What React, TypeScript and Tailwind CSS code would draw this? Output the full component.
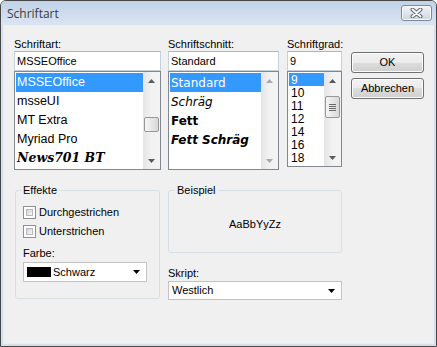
import React from "react";

function Arrow({ up, color }: { up?: boolean; color: string }) {
  return (
    <svg width="7" height="4" viewBox="0 0 7 4">
      <path d={up ? "M3.5 0 L7 4 L0 4 Z" : "M0 0 L7 0 L3.5 4 Z"} fill={color} />
    </svg>
  );
}

function ScrollBar({
  disabled,
  spacer,
  thumb,
  grip,
}: {
  disabled?: boolean;
  spacer?: string;
  thumb?: string;
  grip?: boolean;
}) {
  const c = disabled ? "#a9a9a9" : "#5a5a5a";
  return (
    <div className="w-[17px] shrink-0 flex flex-col bg-gradient-to-r from-[#e4e4e4] via-[#f2f2f2] to-[#f3f3f3]">
      <div className="h-[17px] shrink-0 flex items-center justify-center">
        <Arrow up color={c} />
      </div>
      {thumb ? (
        <>
          <div className={spacer} />
          <div
            className={`${thumb} mx-[1px] w-[15px] shrink-0 rounded-[2px] border border-[#979797] bg-gradient-to-r from-[#f5f5f5] to-[#d9d9d9] flex flex-col items-center justify-center gap-[1px]`}
          >
            {grip ? (
              <>
                <div className="h-px w-[7px] bg-[#6a6a6a]" />
                <div className="h-px w-[7px] bg-[#6a6a6a]" />
                <div className="h-px w-[7px] bg-[#6a6a6a]" />
                <div className="h-px w-[7px] bg-[#6a6a6a]" />
              </>
            ) : null}
          </div>
        </>
      ) : null}
      <div className="flex-1" />
      <div className="h-[17px] shrink-0 flex items-center justify-center">
        <Arrow color={c} />
      </div>
    </div>
  );
}

function Label({ children }: { children: React.ReactNode }) {
  return <div className="h-[14px] leading-[14px] whitespace-nowrap">{children}</div>;
}

function TextBox({ children }: { children: React.ReactNode }) {
  return (
    <div className="h-[20px] bg-white border border-[#c5d2de] border-t-[#abb6c3] leading-[18px] pl-[2px] whitespace-nowrap overflow-hidden">
      {children}
    </div>
  );
}

function Checkbox({ label }: { label: string }) {
  return (
    <div className="h-[13px] flex items-center">
      <div className="w-[13px] h-[13px] border border-[#8e8f8f] bg-white p-[2px] shrink-0">
        <div className="w-full h-full border border-[#b5b9bf] bg-gradient-to-br from-[#d0d3d8] to-[#f7f7f7]" />
      </div>
      <span className="ml-[3px] leading-[13px]">{label}</span>
    </div>
  );
}

function Button({ children }: { children: React.ReactNode }) {
  return (
    <div className="h-[21px] rounded-[3px] border border-[#707070] bg-[linear-gradient(to_bottom,#f2f2f2_0%,#ebebeb_50%,#dddddd_50%,#cfcfcf_100%)] shadow-[inset_0_0_0_1px_#fbfbfb] flex items-center justify-center leading-none">
      {children}
    </div>
  );
}

export default function App() {
  return (
    <div className="w-[437px] h-[347px] font-['Liberation_Sans',Arial,sans-serif] text-[11px] text-black">
      <div className="w-full h-full flex flex-col border border-[#474747] rounded-t-[6px] bg-[#d3e0ef] overflow-hidden">
        {/* Title bar */}
        <div className="h-[24px] shrink-0 flex items-center justify-between pl-[6px] pr-[4px] bg-gradient-to-b from-[#c0d2e7] to-[#dae5f2]">
          <span className="mt-[2px] font-['Open_Sans',sans-serif] text-[12px] text-[#3a3a3a] leading-none">
            Schriftart
          </span>
          <div className="w-[31px] h-[16px] rounded-[3px] border border-[#7d8899] bg-gradient-to-b from-[#f1f4f8] via-[#e1e6ed] to-[#cdd5df] shadow-[inset_0_0_0_1px_#f7f9fb] flex items-center justify-center">
            <svg width="13" height="10" viewBox="0 0 13 10">
              <path d="M2.5 1.5 L10.5 8.5 M10.5 1.5 L2.5 8.5" stroke="#5b6472" strokeWidth="4" strokeLinecap="round" />
              <path d="M2.5 1.5 L10.5 8.5 M10.5 1.5 L2.5 8.5" stroke="#ffffff" strokeWidth="2" strokeLinecap="round" />
            </svg>
          </div>
        </div>

        {/* Client area */}
        <div className="flex-1 mx-[2px] mb-[2px] border border-[#e6eef7] bg-[#f0f0f0] flex flex-col">
          {/* Top row */}
          <div className="flex pt-[11px] pl-[10px]">
            {/* Schriftart */}
            <div className="w-[147px] flex flex-col">
              <Label>Schriftart:</Label>
              <TextBox>MSSEOffice</TextBox>
              <div className="h-[99px] flex border border-[#828790] bg-white">
                <div className="flex-1 pl-[1px] pt-[1px] overflow-hidden text-[12.5px] whitespace-nowrap">
                  <div className="h-[19px] flex items-center pl-[1px] bg-[#3399ff] text-white">MSSEOffice</div>
                  <div className="h-[19px] flex items-center pl-[1px]">msseUI</div>
                  <div className="h-[19px] flex items-center pl-[1px]">MT Extra</div>
                  <div className="h-[19px] flex items-center pl-[1px]">Myriad Pro</div>
                  <div className="h-[19px] flex items-center pl-[1px] font-['DejaVu_Serif',serif] italic font-bold text-[12.5px]">
                    News701 BT
                  </div>
                </div>
                <ScrollBar spacer="h-[28px]" thumb="h-[15px]" />
              </div>
            </div>

            {/* Schriftschnitt */}
            <div className="w-[111px] ml-[7px] flex flex-col">
              <Label>Schriftschnitt:</Label>
              <TextBox>Standard</TextBox>
              <div className="h-[99px] flex border border-[#828790] bg-white">
                <div className="flex-1 pl-[1px] pt-[1px] overflow-hidden font-['DejaVu_Sans',sans-serif] text-[12px] whitespace-nowrap">
                  <div className="h-[19px] flex items-center pl-[1px] bg-[#3399ff] text-white">Standard</div>
                  <div className="h-[19px] flex items-center pl-[1px] italic">Schräg</div>
                  <div className="h-[19px] flex items-center pl-[1px] font-bold">Fett</div>
                  <div className="h-[19px] flex items-center pl-[1px] font-bold italic">Fett Schräg</div>
                </div>
                <ScrollBar disabled />
              </div>
            </div>

            {/* Schriftgrad */}
            <div className="w-[55px] ml-[8px] flex flex-col">
              <Label>Schriftgrad:</Label>
              <TextBox>9</TextBox>
              <div className="h-[96px] flex border border-[#828790] bg-white">
                <div className="flex-1 pl-[1px] pt-[1px] overflow-hidden text-[12px]">
                  <div className="h-[13px] flex items-center pl-[2px] bg-[#3399ff] text-white">9</div>
                  <div className="h-[13px] flex items-center pl-[2px]">10</div>
                  <div className="h-[13px] flex items-center pl-[2px]">11</div>
                  <div className="h-[13px] flex items-center pl-[2px]">12</div>
                  <div className="h-[13px] flex items-center pl-[2px]">14</div>
                  <div className="h-[13px] flex items-center pl-[2px]">16</div>
                  <div className="h-[13px] flex items-center pl-[2px]">18</div>
                </div>
                <ScrollBar spacer="h-[7px]" thumb="h-[22px]" grip />
              </div>
            </div>

            {/* Buttons */}
            <div className="w-[73px] ml-[9px] pt-[15px] flex flex-col gap-[5px]">
              <Button>OK</Button>
              <Button>Abbrechen</Button>
            </div>
          </div>

          {/* Bottom row */}
          <div className="flex mt-[14px] pl-[11px]">
            <fieldset className="w-[145px] h-[115px] border border-[#d5dfe5] rounded-[3px] px-[7px]">
              <legend className="px-[2px] -ml-[2px] leading-[13px]">Effekte</legend>
              <div className="pt-[9px] flex flex-col">
                <Checkbox label="Durchgestrichen" />
                <div className="mt-[6px]">
                  <Checkbox label="Unterstrichen" />
                </div>
                <div className="mt-[9px] h-[13px] leading-[13px]">Farbe:</div>
                <div className="mt-[2px] w-[124px] h-[20px] bg-white border border-[#c3c3c3] flex items-center pl-[3px] pr-[6px]">
                  <div className="w-[24px] h-[10px] bg-black shrink-0" />
                  <span className="ml-[2px] flex-1 leading-none">Schwarz</span>
                  <Arrow color="#000000" />
                </div>
              </div>
            </fieldset>

            <div className="w-[174px] ml-[8px] flex flex-col">
              <fieldset className="h-[69px] border border-[#d5dfe5] rounded-[3px] px-[8px]">
                <legend className="px-[2px] -ml-[2px] leading-[13px]">Beispiel</legend>
                <div className="h-[55px] flex items-center justify-center">AaBbYyZz</div>
              </fieldset>
              <div className="mt-[13px]">
                <Label>Skript:</Label>
              </div>
              <div className="mt-[1px] h-[19px] bg-white border border-[#c3c3c3] flex items-center pl-[3px] pr-[6px]">
                <span className="flex-1 leading-none">Westlich</span>
                <Arrow color="#000000" />
              </div>
            </div>
          </div>
        </div>
      </div>
    </div>
  );
}
